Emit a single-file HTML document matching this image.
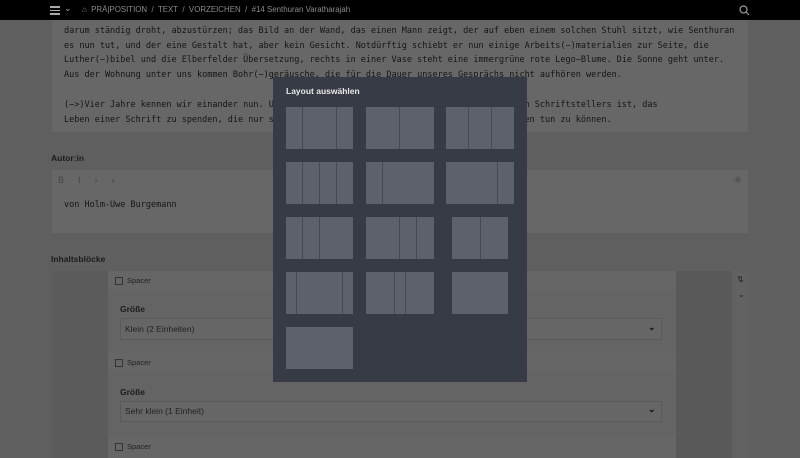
<!DOCTYPE html>
<html><head><meta charset="utf-8"><style>
*{margin:0;padding:0;box-sizing:border-box}
body{width:800px;height:458px;overflow:hidden;background:#5f5f5f;font-family:"Liberation Sans",sans-serif;position:relative}
.a{position:absolute}
.mono{font-family:"DejaVu Sans Mono","Liberation Mono",monospace;font-size:8.5px;color:#151515;white-space:nowrap}
.lbl{font-size:8.5px;font-weight:bold;color:#1c1c1c}
.t{position:absolute;background:#5d6169;height:42px}
.d{position:absolute;top:0;bottom:0;width:1px;background:#454951}
</style></head><body>
<div class="a" style="left:52px;top:0;width:696px;height:132px;background:#676767"></div>
<div class="a mono" style="left:64px;top:9px;line-height:14.8px">ihm gegenüber steht ein Stuhl, der eigentlich kein Stuhl ist, sondern ein Hocker, dessen Sitzfläche wackelt und<br>darum ständig droht, abzustürzen; das Bild an der Wand, das einen Mann zeigt, der auf eben einem solchen Stuhl sitzt, wie Senthuran<br>es nun tut, und der eine Gestalt hat, aber kein Gesicht. Notdürftig schiebt er nun einige Arbeits(−)materialien zur Seite, die<br>Luther(−)bibel und die Elberfelder Übersetzung, rechts in einer Vase steht eine immergrüne rote Lego−Blume. Die Sonne geht unter.<br>Aus der Wohnung unter uns kommen Bohr(−)geräusche, die für die Dauer unseres Gesprächs nicht aufhören werden.<br><br>(−&gt;)Vier Jahre kennen wir einander nun. Und was wir bewundern an der Existenz eines solchen Schriftstellers ist, das<br>Leben einer Schrift zu spenden, die nur sich selbst gehört und ihrem Nächsten nichts dagegen tun zu können.</div>

<div class="a" style="left:0;top:0;width:800px;height:20px;background:#000"></div>
<div class="a" style="left:50px;top:5px;width:10px;height:10px">
<div style="height:1.5px;background:#aaa;margin-top:1px"></div><div style="height:1.5px;background:#aaa;margin-top:2px"></div><div style="height:1.5px;background:#aaa;margin-top:2px"></div></div>
<div class="a" style="left:64px;top:3px;color:#aaa;font-size:9px">⌄</div>
<div class="a" style="left:82px;top:5px;color:#8a8a8a;font-size:7.9px;white-space:nowrap">⌂&nbsp; PRÄ|POSITION &nbsp;/&nbsp; TEXT &nbsp;/&nbsp; VORZEICHEN &nbsp;/&nbsp; #14 Senthuran Varatharajah</div>
<svg class="a" style="left:739px;top:5px" width="11" height="11"><circle cx="4.5" cy="4.5" r="3.5" stroke="#999" stroke-width="1.2" fill="none"/><line x1="7" y1="7" x2="10" y2="10" stroke="#999" stroke-width="1.2"/></svg>

<div class="a lbl" style="left:51px;top:153px">Autor:in</div>
<div class="a" style="left:52px;top:170px;width:696px;height:63px;background:#676767"></div>
<div class="a" style="left:58px;top:175px;color:#444;font-size:9px;letter-spacing:14px">BI›‹</div>
<div class="a" style="left:734px;top:174px;color:#555;font-size:9px">◉</div>
<div class="a mono" style="left:64px;top:200px">von Holm-Uwe Burgemann</div>

<div class="a lbl" style="left:51px;top:254px">Inhaltsblöcke</div>
<div class="a" style="left:52px;top:271px;width:56px;height:187px;background:#5b5b5b"></div>
<div class="a" style="left:108px;top:271px;width:568px;height:187px;background:#646464"></div>
<div class="a" style="left:676px;top:271px;width:56px;height:187px;background:#595959"></div>
<div class="a" style="left:732px;top:271px;width:16px;height:187px;background:#626262"></div>
<div class="a" style="left:737px;top:275px;color:#222;font-size:8px">⇅</div>
<div class="a" style="left:738px;top:290px;color:#222;font-size:8px">⌄</div>

<div class="a" style="left:108px;top:271px;width:568px;height:19px;background:#666"></div>
<div class="a" style="left:115px;top:277px;width:8px;height:8px;border:1px solid #333"></div>
<div class="a" style="left:127px;top:276px;font-size:7.5px;color:#222">Spacer</div>
<div class="a lbl" style="left:120px;top:304px">Größe</div>
<div class="a" style="left:120px;top:318px;width:542px;height:22px;background:#666;border:1px solid #5a5a5a"></div>
<div class="a" style="left:125px;top:324px;font-size:8.5px;color:#222">Klein (2 Einheiten)</div>
<div class="a" style="left:648px;top:322px;font-size:9px;color:#111;font-weight:bold">⌄</div>

<div class="a" style="left:108px;top:353px;width:568px;height:20px;background:#666"></div>
<div class="a" style="left:115px;top:359px;width:8px;height:8px;border:1px solid #333"></div>
<div class="a" style="left:127px;top:358px;font-size:7.5px;color:#222">Spacer</div>
<div class="a lbl" style="left:120px;top:387px">Größe</div>
<div class="a" style="left:120px;top:401px;width:542px;height:21px;background:#666;border:1px solid #5a5a5a"></div>
<div class="a" style="left:125px;top:406px;font-size:8.5px;color:#222">Sehr klein (1 Einheit)</div>
<div class="a" style="left:648px;top:404px;font-size:9px;color:#111;font-weight:bold">⌄</div>

<div class="a" style="left:108px;top:437px;width:568px;height:21px;background:#666"></div>
<div class="a" style="left:115px;top:443px;width:8px;height:8px;border:1px solid #333"></div>
<div class="a" style="left:127px;top:442px;font-size:7.5px;color:#222">Spacer</div>

<div class="a" style="left:273px;top:77px;width:254px;height:305px;background:#363b45"></div>
<div class="a" style="left:286px;top:86px;font-size:8.5px;font-weight:bold;color:#e8e8e8">Layout auswählen</div>

<div class="t" style="left:286px;top:107px;width:67px"><div class="d" style="left:16px"></div><div class="d" style="left:50px"></div></div>
<div class="t" style="left:366px;top:107px;width:68px"><div class="d" style="left:33px"></div></div>
<div class="t" style="left:446px;top:107px;width:68px"><div class="d" style="left:22px"></div><div class="d" style="left:45px"></div></div>

<div class="t" style="left:286px;top:162px;width:67px"><div class="d" style="left:16px"></div><div class="d" style="left:33px"></div><div class="d" style="left:50px"></div></div>
<div class="t" style="left:366px;top:162px;width:68px"><div class="d" style="left:16px"></div></div>
<div class="t" style="left:446px;top:162px;width:68px"><div class="d" style="left:51px"></div></div>

<div class="t" style="left:286px;top:217px;width:67px"><div class="d" style="left:16px"></div><div class="d" style="left:33px"></div></div>
<div class="t" style="left:366px;top:217px;width:68px"><div class="d" style="left:33px"></div><div class="d" style="left:50px"></div></div>
<div class="t" style="left:452px;top:217px;width:56px"><div class="d" style="left:28px"></div></div>

<div class="t" style="left:286px;top:272px;width:67px"><div class="d" style="left:10px"></div><div class="d" style="left:56px"></div></div>
<div class="t" style="left:366px;top:272px;width:68px"><div class="d" style="left:28px"></div><div class="d" style="left:39px"></div></div>
<div class="t" style="left:452px;top:272px;width:56px"></div>

<div class="t" style="left:286px;top:327px;width:67px"></div>
</body></html>
